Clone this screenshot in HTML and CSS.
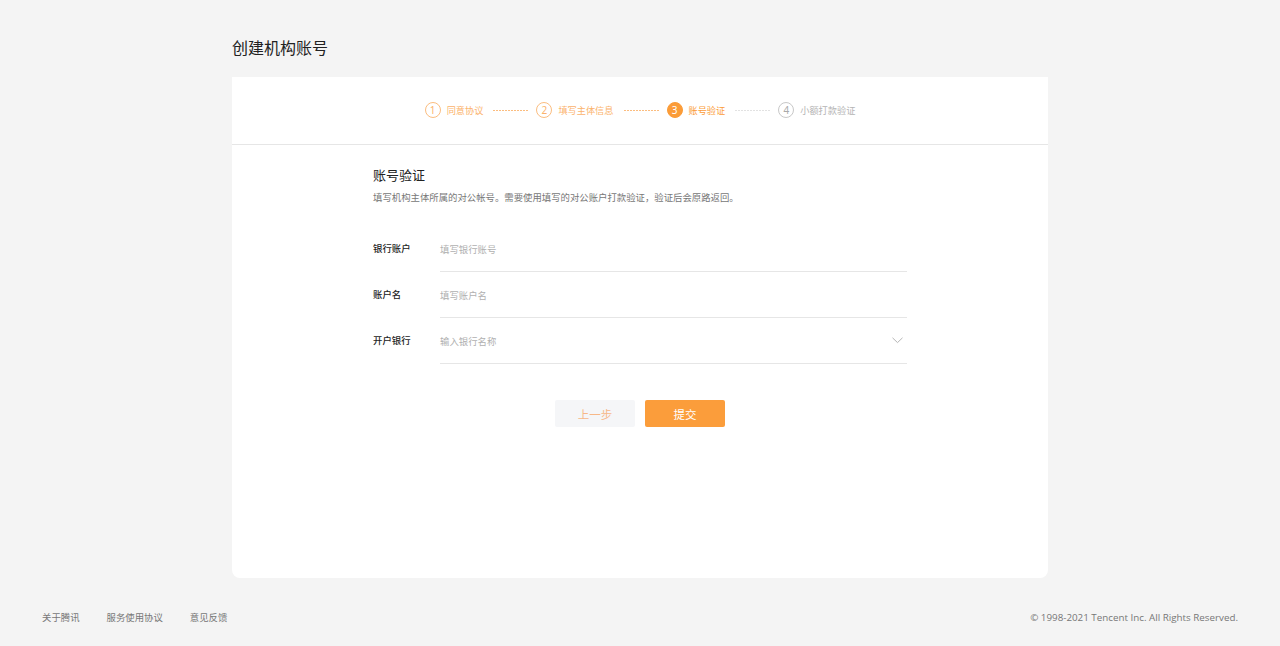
FILE: index.html
```html
<!DOCTYPE html>
<html lang="zh-CN">
<head>
<meta charset="utf-8">
<title>创建机构账号</title>
<link rel="stylesheet" href="styles.css">
</head>
<body>
<div class="page">
  <h1 class="page-title">创建机构账号</h1>
  <div class="card">
    <div class="steps">
      <div class="step done"><span class="num">1</span><span class="label">同意协议</span></div>
      <span class="sep done"></span>
      <div class="step done"><span class="num">2</span><span class="label">填写主体信息</span></div>
      <span class="sep done"></span>
      <div class="step active"><span class="num">3</span><span class="label">账号验证</span></div>
      <span class="sep"></span>
      <div class="step"><span class="num">4</span><span class="label">小额打款验证</span></div>
    </div>
    <div class="content">
      <h2 class="sec-title">账号验证</h2>
      <p class="sec-desc">填写机构主体所属的对公帐号。需要使用填写的对公账户打款验证，验证后会原路返回。</p>
      <div class="form">
        <div class="row">
          <label class="lbl">银行账户</label>
          <div class="field"><span class="ph">填写银行账号</span></div>
        </div>
        <div class="row">
          <label class="lbl">账户名</label>
          <div class="field"><span class="ph">填写账户名</span></div>
        </div>
        <div class="row">
          <label class="lbl">开户银行</label>
          <div class="field"><span class="ph">输入银行名称</span>
            <svg class="chev" width="11" height="7" viewBox="0 0 11 7"><path d="M0.5 0.8 L5.5 5.6 L10.5 0.8" fill="none" stroke="#b5b5b5" stroke-width="1"/></svg>
          </div>
        </div>
      </div>
      <div class="actions">
        <button class="btn btn-prev">上一步</button>
        <button class="btn btn-primary">提交</button>
      </div>
    </div>
  </div>
</div>
<footer class="footer">
  <div class="links"><a>关于腾讯</a><a>服务使用协议</a><a>意见反馈</a></div>
  <div class="copy">© 1998-2021 Tencent Inc. All Rights Reserved.</div>
</footer>
</body>
</html>
```
FILE: styles.css
```css
* { box-sizing: border-box; }
html, body { margin: 0; padding: 0; }
body {
  background: #f4f4f4;
  font-family: "Noto Sans CJK SC", "Noto Sans", sans-serif;
  color: #333;
  width: 1280px;
  height: 646px;
  overflow: hidden;
}
.page { width: 816px; margin: 0 auto; padding-top: 36px; }
.page-title {
  margin: 0 0 19px;
  font-size: 16px;
  line-height: 22px;
  font-weight: 400;
  color: #222;
}
.card {
  background: #fff;
  height: 501px;
  border-radius: 0 0 8px 8px;
}
.steps {
  height: 68px;
  border-bottom: 1px solid #e6e6e6;
  display: flex;
  align-items: center;
  justify-content: center;
  padding-bottom: 1px;
}
.step { display: flex; align-items: center; color: #b4b4b4; }
.step .num {
  width: 16px; height: 16px;
  border-radius: 50%;
  border: 1px solid #c8c8c8;
  display: flex; align-items: center; justify-content: center;
  font-size: 10px; line-height: 1;
  font-family: "Noto Sans", sans-serif;
  color: #aaa;
}
.step .label { margin-left: 6px; font-size: 9.2px; line-height: 14px; }
.step.done { color: #fbb36c; }
.step.done .num { border-color: #fbbd80; color: #fbb36c; }
.step.active { color: #fb9c38; }
.step.active .num { background: #fb9c38; border-color: #fb9c38; color: #fff; }
.sep {
  width: 36px;
  height: 1px;
  margin: 0 7px 0 10px;
  background: repeating-linear-gradient(90deg, #e2e2e2 0 2px, transparent 2px 3px);
}
.sep.done { background: repeating-linear-gradient(90deg, #fbbd80 0 2px, transparent 2px 3px); }
.content { padding: 21px 0 0 141px; width: 675px; }
.sec-title {
  margin: 0;
  font-size: 13px;
  line-height: 18px;
  font-weight: 400;
  color: #222;
}
.sec-desc {
  margin: 6px 0 0;
  font-size: 9.4px;
  line-height: 14px;
  color: #777;
}
.form { margin-top: 22px; }
.row { display: flex; height: 46px; }
.lbl {
  width: 67px;
  font-size: 9.4px;
  line-height: 14px;
  color: #222;
  font-weight: 500;
  padding-top: 15px;
}
.field {
  flex: 1;
  border-bottom: 1px solid #e6e6e6;
  display: flex;
  align-items: center;
  justify-content: space-between;
  padding-right: 4px;
}
.ph { font-size: 9.4px; line-height: 14px; color: #b0b0b0; }
.chev { display: block; }
.actions {
  display: flex;
  justify-content: center;
  gap: 10px;
  margin-top: 36px;
  margin-left: -141px;
  width: 816px;
}
.btn {
  width: 80px;
  height: 27px;
  border: 0;
  border-radius: 2px;
  font-family: "Noto Sans CJK SC", sans-serif;
  font-size: 11.5px;
  padding: 0;
}
.btn-prev { background: #f5f6f8; color: #f7b888; }
.btn-primary { background: #fb9d3b; color: #fff; }
.footer {
  display: flex;
  justify-content: space-between;
  align-items: center;
  padding: 0 42px;
  margin-top: 32px;
  font-size: 9.4px;
  color: #777;
}
.links { display: flex; gap: 27px; }
.links a { color: #777; }
.copy { font-family: "Open Sans", "Noto Sans", sans-serif; font-size: 9.8px; color: #777; }
```
